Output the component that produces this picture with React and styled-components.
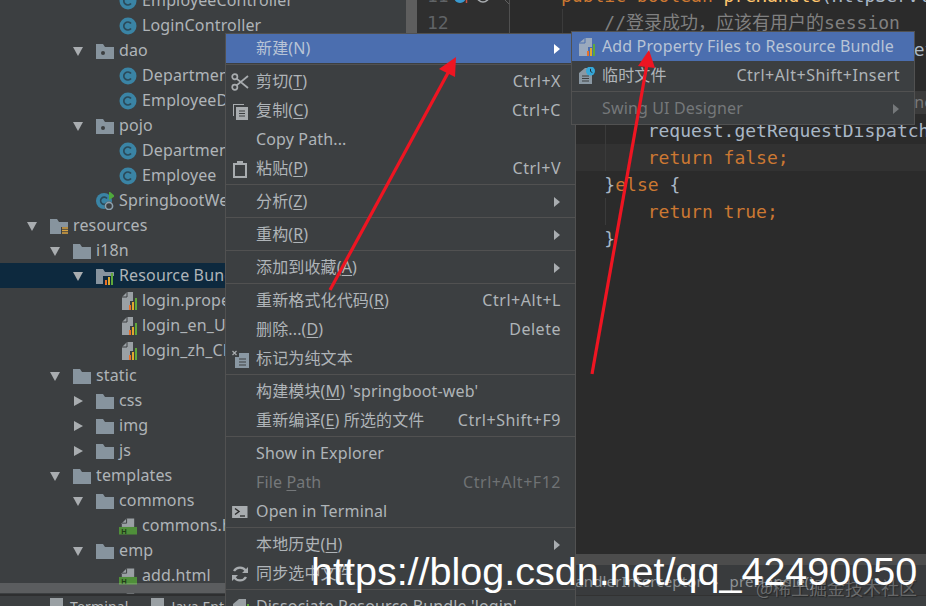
import React from "react";
import styled, { createGlobalStyle } from "styled-components";

const Global = createGlobalStyle`
  html, body { margin: 0; padding: 0; background: #3c3f41; overflow: hidden; }
`;
const UI = `"Noto Sans", "Noto Sans CJK SC", sans-serif`;
const MONO = `"DejaVu Sans Mono", "Noto Sans CJK SC", monospace`;

const Page = styled.div`
  position: relative; width: 926px; height: 606px; overflow: hidden;
  display: flex; flex-direction: column; background: #3c3f41;
  font-family: ${UI}; font-size: 16px; letter-spacing: 0.14px; color: #afb4b8;
`;
const Workspace = styled.div`
  display: flex; height: 596px; flex: none;
`;
const Sidebar = styled.aside`
  position: relative; width: 417px; flex: none; overflow: hidden; display: flex; border-bottom: 2px solid #2e2f30; box-sizing: border-box;
`;
const Tree = styled.div`
  flex: 1; min-width: 0; margin-top: -12px;
`;
const Scrollbar = styled.div`
  width: 11px; flex: none; background: #5e5e5e;
`;
const HBar = styled.div`
  position: absolute; left: 0; right: 11px; top: 583px; height: 10px; background: rgba(255, 255, 255, 0.16);
`;
const Row = styled.div`
  height: 25px; display: flex; align-items: center; white-space: nowrap;
  padding-left: ${p => 26 + p.$depth * 23}px;
  background: ${p => (p.$selected ? "#0d293e" : "transparent")};
`;
const Twisty = styled.span`
  width: 12px; height: 12px; flex: none; margin-right: 12px; display: flex; align-items: center; justify-content: center;
`;
const IconSlot = styled.span`
  width: 18px; height: 18px; flex: none; margin-right: 5px; display: flex;
`;
const RowLabel = styled.span`
  padding-bottom: 2px;
`;
const Editor = styled.main`
  flex: 1; min-width: 0; display: flex; flex-direction: column; overflow: hidden;
`;
const EditorBody = styled.div`
  flex: 1; min-height: 0; display: flex; background: #2b2b2b; overflow: hidden;
`;
const Gutter = styled.div`
  width: 93px; flex: none; box-sizing: border-box; background: #2f2f2f; border-right: 1px solid #505050;
  padding: 0 0 0 10px; font: 18px/27px ${MONO}; letter-spacing: 0; color: #606366; overflow: hidden;
`;
const GutterLine = styled.div`
  height: 27px; display: flex;
  &:first-child { margin-top: -18px; }
`;
const GutterMarks = styled.svg`
  margin-left: 5px; flex: none;
`;
const Code = styled.div`
  flex: 1; min-width: 0; font: 18px/27px ${MONO}; letter-spacing: 0; color: #a9b7c6; overflow: hidden;
`;
const CodeLine = styled.div`
  height: 27px; white-space: pre; padding-left: 51px; position: relative;
  background-color: ${p => (p.$active ? "#323232" : "transparent")};
  &:first-child { margin-top: -18px; }
`;
const Guide = styled.i`
  position: absolute; top: 0; bottom: 0; width: 1px; background: #3b3b3b;
  left: ${p => p.$x}px;
`;
const Kw = styled.span`color: #cc7832;`;
const Fn = styled.span`color: #ffc66d;`;
const Cm = styled.span`color: #808080;`;
const Hint = styled.span`
  display: inline-block; vertical-align: top; margin-top: 1px; height: 23px; line-height: 22px;
  padding: 0 8px 0 39px; color: #787878; font-family: ${UI}; font-size: 16px; background: #3b3b3b;
`;
const Nudge = styled.span`
  display: inline-block; width: 6px;
`;
const EditorScroll = styled.div`
  height: 11px; flex: none; background: #4c4c4c;
`;
const Crumbs = styled.div`
  height: 31px; flex: none; box-sizing: border-box; padding: 2px 0 0 147px; display: flex; align-items: center; gap: 11px;
  background: #393b3d; font-size: 15px; color: #8f9396; white-space: nowrap;
  border-bottom: 1px solid #323232;
`;
const ToolTabs = styled.footer`
  height: 10px; flex: none; display: flex; padding-left: 50px; gap: 23px; font-size: 14px; overflow: hidden; color: #b5b8ba;
`;
const ToolTab = styled.div`
  display: flex; gap: 7px; height: 24px; align-items: flex-start; padding-top: 1px;
`;
const ToolGlyph = styled.span`
  width: 13px; height: 13px; background: #9aa0a4; flex: none; margin-top: 1px;
`;
const Menu = styled.div`
  position: absolute; box-sizing: border-box; background: #3c3f41; border: 1px solid #515151;
  left: ${p => p.$x}px; top: ${p => p.$y}px; width: ${p => p.$w}px;
`;
const MenuGroup = styled.div`
  padding: 2px 0 1px;
  &:first-child { padding-top: 0; }
  & + & { border-top: 1px solid #515151; }
`;
const Item = styled.div`
  height: 29px; display: flex; align-items: center; padding: 0 14px 0 5px; white-space: nowrap;
  background: ${p => (p.$selected ? "#4b6eaf" : "transparent")};
  color: ${p => (p.$disabled ? "#75787a" : p.$selected ? "#b8c4d6" : "#afb4b8")};
  u { text-underline-offset: 2px; }
`;
const ItemIcon = styled.span`
  width: 18px; height: 18px; flex: none; margin-right: 7px; display: flex;
`;
const ItemLabel = styled.span`
  flex: 1; padding-bottom: ${p => (p.$zh ? 4 : 2)}px;
`;
const Shortcut = styled.span`
  padding-bottom: 2px; letter-spacing: 0.52px;
  color: ${p => (p.$disabled ? "#6f7274" : "#afb4b8")};
`;
const SubArrow = styled.span`
  width: 0; height: 0; border-left: 6px solid ${p => (p.$selected ? "#ffffff" : p.$disabled ? "#75787a" : "#a9adb0")};
  border-top: 5px solid transparent; border-bottom: 5px solid transparent; margin-right: 1px;
`;
const ArrowLayer = styled.svg`
  position: absolute; left: 0; top: 0; pointer-events: none;
`;
const Watermark = styled.div`
  position: absolute; left: 311px; top: 548px; white-space: nowrap; color: #ffffff; letter-spacing: 0;
  font: 39.5px/46px "Liberation Sans", Arial, sans-serif;
`;
const Stamp = styled.div`
  position: absolute; right: 9px; top: 575px; white-space: nowrap; color: rgba(190, 190, 190, 0.42); letter-spacing: 0;
  font: 18px/24px "Noto Sans CJK SC", sans-serif; text-shadow: 1px 1px 1px rgba(0,0,0,.35);
`;

const Sv = ({ children, s = 18 }) => <svg width={s} height={s} viewBox="0 0 18 18">{children}</svg>;
const Bars = ({ x = 0 }) => (
  <g transform={`translate(${x} 0)`}>
    <rect x="9" y="13" width="2" height="5" fill="#e8702a" />
    <rect x="12" y="10" width="2" height="8" fill="#e0a92e" />
    <rect x="15" y="6" width="2" height="12" fill="#5fa83a" />
  </g>
);
const Down = () => <svg width="12" height="12" viewBox="0 0 12 12"><path d="M1 2h10L6 11z" fill="#a9adb0" /></svg>;
const Right = () => <svg width="12" height="12" viewBox="0 0 12 12"><path d="M2 1v10l9-5z" fill="#a9adb0" /></svg>;
const FolderShape = "M0 2h7l2 3h9v12H0z";
const Folder = () => <Sv><path d={FolderShape} fill="#87949e" /></Sv>;
const Pkg = () => <Sv><path d={FolderShape} fill="#87949e" /><circle cx="7" cy="11" r="2" fill="#3c3f41" /></Sv>;
const Res = () => (
  <Sv>
    <path d={FolderShape} fill="#87949e" />
    <path d="M11 10h8v8h-8z" fill="#3c3f41" />
    <path d="M12 11h7M12 13.5h7M12 16h7" stroke="#d9a441" strokeWidth="1.5" />
  </Sv>
);
const Cls = () => (
  <Sv>
    <circle cx="9" cy="9" r="8.5" fill="#3a84a5" />
    <path d="M12 6.6A4 4 0 1 0 12 11.4" fill="none" stroke="#2b4a5a" strokeWidth="1.7" />
  </Sv>
);
const Spring = () => (
  <Sv>
    <circle cx="8" cy="9" r="8" fill="#3a84a5" />
    <path d="M11 6.5A3.6 3.6 0 1 0 11 11" fill="none" stroke="#2b4a5a" strokeWidth="1.6" />
    <path d="M13 -1l6 5-6 4z" fill="#4fa83c" />
    <circle cx="13" cy="14" r="4.5" fill="#3c3f41" />
    <circle cx="13" cy="14" r="3.6" fill="none" stroke="#8da0ad" strokeWidth="1.6" />
  </Sv>
);
const BundleFolder = () => (
  <Sv>
    <path d={FolderShape} fill="#87949e" />
    <path d="M7 9h12v9H7z" fill="#0d293e" />
    <Bars />
  </Sv>
);
const PropFile = () => (
  <Sv>
    <path d="M8 0h6v9h-3v9H3V5z" fill="#9aa0a4" />
    <path d="M8 0v5H3" fill="none" stroke="#3c3f41" strokeWidth="1" />
    <Bars x={1} />
  </Sv>
);
const Html = () => (
  <svg width="19" height="18" viewBox="0 0 19 18">
    <path d="M8 1h8v9H3V6z" fill="#9aa0a4" />
    <path d="M8 1v5H3" fill="none" stroke="#3c3f41" strokeWidth="1" />
    <rect y="10" width="19" height="8" fill="#4f8f3a" />
    <text x="2.5" y="17" fontSize="8" fontFamily="Liberation Sans" fontWeight="700" fill="#233a1a">H</text>
  </svg>
);
const ScissorsI = () => (
  <Sv>
    <circle cx="3.8" cy="3.8" r="2.6" fill="none" stroke="#a8acaf" strokeWidth="1.7" />
    <circle cx="3.8" cy="14.2" r="2.6" fill="none" stroke="#a8acaf" strokeWidth="1.7" />
    <path d="M5.6 5.6L17 15M5.6 12.4L17 3" stroke="#a8acaf" strokeWidth="1.8" />
  </Sv>
);
const CopyI = () => (
  <Sv>
    <path d="M2 2h11v1H3v11H2z" fill="#a8acaf" />
    <rect x="5" y="5" width="12" height="13" fill="#a8acaf" />
    <path d="M8 9h6M8 11.5h6M8 14h6" stroke="#3c3f41" strokeWidth="1.2" />
  </Sv>
);
const PasteI = () => (
  <Sv>
    <rect x="3" y="4" width="12" height="13" fill="none" stroke="#a8acaf" strokeWidth="2" />
    <rect x="6" y="1" width="6" height="4" fill="#a8acaf" />
  </Sv>
);
const PlainI = () => (
  <Sv>
    <path d="M4 3h14v16H4z" fill="#8a98a3" />
    <path d="M8 9h7M8 12h7M8 15h7" stroke="#3c3f41" strokeWidth="1.1" />
    <rect x="0" y="0" width="8" height="7" fill="#3c3f41" />
    <path d="M1.5 1l4 4M5.5 1l-4 4" stroke="#a8acaf" strokeWidth="1.2" />
  </Sv>
);
const TermI = () => (
  <Sv>
    <rect x="1" y="3" width="14" height="12" fill="#a8acaf" transform="scale(1.1 1)" />
    <path d="M4 5.5L8 8.5 4 11.5" fill="none" stroke="#2b2b2b" strokeWidth="1.4" />
    <path d="M9 13h5" stroke="#2b2b2b" strokeWidth="1.3" />
  </Sv>
);
const SyncI = () => (
  <Sv>
    <path d="M15 6A7 7 0 0 0 3 6M3 12a7 7 0 0 0 12 0" fill="none" stroke="#a8acaf" strokeWidth="2.4" />
    <path d="M11 8h6V2zM7 10H1v6z" fill="#a8acaf" />
  </Sv>
);
const BundleAdd = () => (
  <Sv>
    <path d="M8 0h7v9h-4v9H2V5z" fill="#9aa9bd" />
    <path d="M8 0v5H2" fill="none" stroke="#4b6eaf" strokeWidth="1" />
    <Bars x={1} />
  </Sv>
);
const Scratch = () => (
  <Sv>
    <path d="M8 1h7v16H2V6z" fill="#8a98a3" />
    <path d="M5 9h7M5 11.5h7M5 14h7" stroke="#3c3f41" strokeWidth="1.1" />
    <circle cx="13.5" cy="4" r="4.5" fill="#34a7d8" />
    <path d="M13.5 1.8V4.4L15.4 5.6" fill="none" stroke="#24313a" strokeWidth="1" />
  </Sv>
);
const Dissociate = () => (
  <Sv>
    <path d="M8 1h7v16H2V6z" fill="#9aa0a4" />
    <Bars x={1} />
  </Sv>
);

const tree = [
  [3, "", Cls, "EmployeeController"], [3, "", Cls, "LoginController"],
  [2, "d", Pkg, "dao"], [3, "", Cls, "DepartmentDao"], [3, "", Cls, "EmployeeDao"],
  [2, "d", Pkg, "pojo"], [3, "", Cls, "Department"], [3, "", Cls, "Employee"],
  [2, "", Spring, "SpringbootWebApplication"],
  [0, "d", Res, "resources"], [1, "d", Folder, "i18n"],
  [2, "d", BundleFolder, "Resource Bundle 'login'", true],
  [3, "", PropFile, "login.properties"], [3, "", PropFile, "login_en_US.properties"], [3, "", PropFile, "login_zh_CN.properties"],
  [1, "d", Folder, "static"], [2, "r", Folder, "css"], [2, "r", Folder, "img"], [2, "r", Folder, "js"],
  [1, "d", Folder, "templates"], [2, "d", Folder, "commons"], [3, "", Html, "commons.html"],
  [2, "d", Folder, "emp"], [3, "", Html, "add.html"], [3, "", Html, "list.html"],
];

const L = ({ t, m }) => <>{t}(<u>{m}</u>)</>;
const groups = [
  [{ zh: true, label: <>新建(N)</>, arrow: true, selected: true }],
  [
    { zh: true, icon: ScissorsI, label: <L t="剪切" m="T" />, sc: "Ctrl+X" },
    { zh: true, icon: CopyI, label: <L t="复制" m="C" />, sc: "Ctrl+C" },
    { label: "Copy Path..." },
    { zh: true, icon: PasteI, label: <L t="粘贴" m="P" />, sc: "Ctrl+V" },
  ],
  [{ zh: true, label: <L t="分析" m="Z" />, arrow: true }],
  [{ zh: true, label: <L t="重构" m="R" />, arrow: true }],
  [{ zh: true, label: <L t="添加到收藏" m="A" />, arrow: true }],
  [
    { zh: true, label: <L t="重新格式化代码" m="R" />, sc: "Ctrl+Alt+L" },
    { zh: true, label: <>删除...(<u>D</u>)</>, sc: "Delete" },
    { zh: true, icon: PlainI, label: "标记为纯文本" },
  ],
  [
    { zh: true, label: <><L t="构建模块" m="M" /> 'springboot-web'</> },
    { zh: true, label: <>重新编译(<u>E</u>) 所选的文件</>, sc: "Ctrl+Shift+F9" },
  ],
  [
    { label: "Show in Explorer" },
    { label: <>File <u>P</u>ath</>, sc: "Ctrl+Alt+F12", disabled: true },
    { icon: TermI, label: "Open in Terminal" },
  ],
  [
    { zh: true, label: <L t="本地历史" m="H" />, arrow: true },
    { zh: true, icon: SyncI, label: "同步选中文件" },
  ],
  [{ icon: Dissociate, label: "Dissociate Resource Bundle 'login'" }],
];
const subGroups = [
  [
    { icon: BundleAdd, label: "Add Property Files to Resource Bundle", selected: true },
    { zh: true, icon: Scratch, label: "临时文件", sc: "Ctrl+Alt+Shift+Insert" },
  ],
  [{ label: "Swing UI Designer", arrow: true, disabled: true }],
];

const code = [
  { g: [], c: <><Kw>public boolean </Kw><Fn>preHandle</Fn>(HttpServletRequest request)</> },
  { g: [0], c: <>    <Cm>//登录成功，应该有用户的session</Cm></> },
  { g: [0], c: <>    Object loginUser =<Nudge /> request.getSession().getAttribute()</> },
  { g: [0], c: <>    <Kw>if</Kw>(loginUser == <Kw>null</Kw>){"{"}</> },
  { g: [0, 1], c: <>        request.setAttribute(<Hint>ne</Hint></> },
  { g: [0, 1], c: <>        request.getRequestDispatcher()</> },
  { g: [0, 1], active: true, c: <>        <Kw>return false;</Kw></> },
  { g: [0], c: <>    {"}"}<Kw>else</Kw> {"{"}</> },
  { g: [0, 1], c: <>        <Kw>return true;</Kw></> },
  { g: [0], c: <>    {"}"}</> },
];

const MenuBlock = ({ x, y, w, data }) => (
  <Menu $x={x} $y={y} $w={w}>
    {data.map((group, i) => (
      <MenuGroup key={i}>
        {group.map((it, j) => {
          const Ic = it.icon;
          return (
            <Item key={j} $selected={it.selected} $disabled={it.disabled}>
              <ItemIcon>{Ic && <Ic />}</ItemIcon>
              <ItemLabel $zh={it.zh}>{it.label}</ItemLabel>
              {it.sc && <Shortcut $disabled={it.disabled}>{it.sc}</Shortcut>}
              {it.arrow && <SubArrow $selected={it.selected} $disabled={it.disabled} />}
            </Item>
          );
        })}
      </MenuGroup>
    ))}
  </Menu>
);

export default function App() {
  return (
    <Page>
      <Global />
      <Workspace>
        <Sidebar>
          <Tree>
            {tree.map(([depth, tw, Ic, text, sel], i) => (
              <Row key={i} $depth={depth} $selected={sel}>
                <Twisty>{tw === "d" ? <Down /> : tw === "r" ? <Right /> : null}</Twisty>
                <IconSlot><Ic /></IconSlot>
                <RowLabel>{text}</RowLabel>
              </Row>
            ))}
          </Tree>
          <Scrollbar />
          <HBar />
        </Sidebar>
        <Editor>
          <EditorBody>
            <Gutter>
              <GutterLine>
                11
                <GutterMarks width="64" height="27" viewBox="0 0 64 27">
                  <circle cx="6" cy="15" r="6" fill="#3a9ad0" />
                  <path d="M12.5 6v15" stroke="#c9503f" strokeWidth="1.5" />
                  <circle cx="29" cy="14" r="6" fill="none" stroke="#a9adb0" strokeWidth="1.6" />
                  <path d="M51 18l5 5 5-5" fill="none" stroke="#606060" strokeWidth="1" />
                </GutterMarks>
              </GutterLine>
              {[12, 13, 14, 15, 16, 17, 18, 19, 20].map(n => <GutterLine key={n}>{n}</GutterLine>)}
            </Gutter>
            <Code>
              {code.map((l, i) => (
                <CodeLine key={i} $active={l.active}>
                  {l.g.map(g => <Guide key={g} $x={52 + g * 43} />)}
                  {l.c}
                </CodeLine>
              ))}
            </Code>
          </EditorBody>
          <EditorScroll />
          <Crumbs>
            <span>HandlerInterceptor</span><span>›</span><span>preHandle()</span>
          </Crumbs>
        </Editor>
      </Workspace>
      <ToolTabs>
        <ToolTab><ToolGlyph />Terminal</ToolTab>
        <ToolTab><ToolGlyph />Java Enterprise</ToolTab>
      </ToolTabs>

      <MenuBlock x={225} y={33} w={351} data={groups} />
      <MenuBlock x={571} y={31} w={344} data={subGroups} />

      <ArrowLayer width="926" height="606" viewBox="0 0 926 606">
        <path d="M330 290L449 71" stroke="#ee1522" strokeWidth="3.2" fill="none" />
        <path d="M456 57L439 69 455 77z" fill="#ee1522" />
        <path d="M592 374L647 64" stroke="#ee1522" strokeWidth="3.2" fill="none" />
        <path d="M649 50L638 66 655 68z" fill="#ee1522" />
      </ArrowLayer>
      <Stamp>@稀土掘金技术社区</Stamp>
      <Watermark>https://blog.csdn.net/qq_42490050</Watermark>
    </Page>
  );
}
